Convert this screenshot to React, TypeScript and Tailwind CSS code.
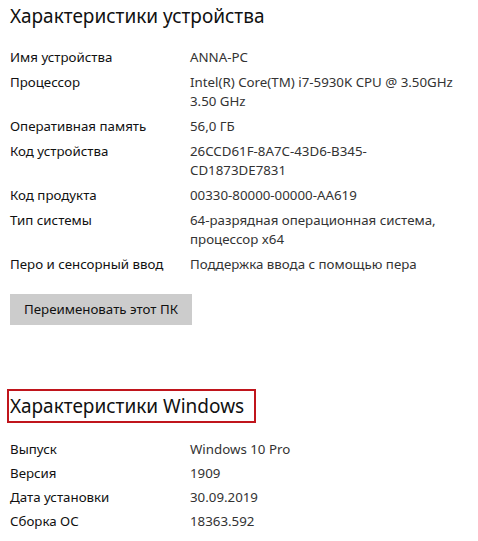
import React from "react";

const device: [string, string[]][] = [
  ["Имя устройства", ["ANNA-PC"]],
  ["Процессор", ["Intel(R) Core(TM) i7-5930K CPU @ 3.50GHz", "3.50 GHz"]],
  ["Оперативная память", ["56,0 ГБ"]],
  ["Код устройства", ["26CCD61F-8A7C-43D6-B345-", "CD1873DE7831"]],
  ["Код продукта", ["00330-80000-00000-AA619"]],
  ["Тип системы", ["64-разрядная операционная система,", "процессор x64"]],
  ["Перо и сенсорный ввод", ["Поддержка ввода с помощью пера"]],
];

const windows: [string, string[]][] = [
  ["Выпуск", ["Windows 10 Pro"]],
  ["Версия", ["1909"]],
  ["Дата установки", ["30.09.2019"]],
  ["Сборка ОС", ["18363.592"]],
];

function Rows({ rows, gap }: { rows: [string, string[]][]; gap: string }) {
  return (
    <div className={`flex flex-col ${gap}`}>
      {rows.map(([k, v]) => (
        <div key={k} className="grid grid-cols-[180px_1fr] text-[13.3px] leading-[19px]">
          <div className="text-[#111]">{k}</div>
          <div className="text-[#333]">
            {v.map((l) => (
              <div key={l} className="whitespace-nowrap">{l}</div>
            ))}
          </div>
        </div>
      ))}
    </div>
  );
}

export default function App() {
  return (
    <div
      className="w-[478px] h-[541px] bg-white pl-[10px] overflow-hidden"
      style={{ fontFamily: '"Noto Sans", "Open Sans", sans-serif' }}
    >
      <div className="text-[19px] leading-[28px] pt-[2px] text-[#111]">Характеристики устройства</div>
      <div className="mt-[18px]">
        <Rows rows={device} gap="gap-[6px]" />
      </div>
      <div className="mt-[20px]">
        <button className="w-[182px] h-[31px] bg-[#cccccc] text-[13.3px] text-[#111]">
          Переименовать этот ПК
        </button>
      </div>
      <div className="mt-[64px] -ml-[3px] w-[249px] h-[34px] border-2 border-[#c0151c] flex items-center pl-[1px]">
        <span className="text-[19px] leading-[28px] text-[#111]">Характеристики Windows</span>
      </div>
      <div className="mt-[17px]">
        <Rows rows={windows} gap="gap-[5px]" />
      </div>
    </div>
  );
}
